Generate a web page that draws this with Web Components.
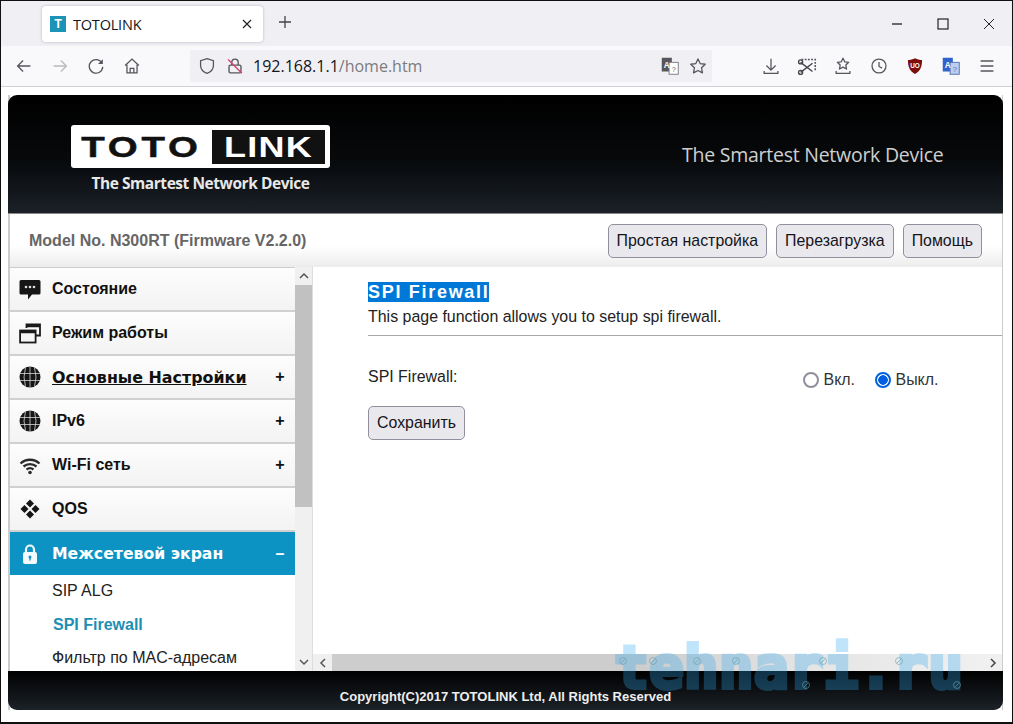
<!DOCTYPE html>
<html lang="ru">
<head>
<meta charset="utf-8">
<title>TOTOLINK</title>
<style>
html,body{margin:0;padding:0;height:100%;background:#fff;overflow:hidden;}
body{font-family:"Liberation Sans",Arial,sans-serif;}
#win{display:flex;flex-direction:column;width:1013px;height:724px;box-sizing:border-box;border:1px solid #111;border-bottom-width:2px;position:relative;overflow:hidden;}
</style>
</head>
<body>
<div id="win">
  <browser-chrome></browser-chrome>
  <router-frame>
    <router-header></router-header>
    <model-bar model="Model No. N300RT (Firmware V2.2.0)">
      <router-button>Простая настройка</router-button>
      <router-button>Перезагрузка</router-button>
      <router-button>Помощь</router-button>
    </model-bar>
    <div style="display:flex;height:404px">
      <side-menu>
        <menu-row icon="chat">Состояние</menu-row>
        <menu-row icon="windows">Режим работы</menu-row>
        <menu-row icon="globe" mark="+" wide underline>Основные Настройки</menu-row>
        <menu-row icon="globe" mark="+">IPv6</menu-row>
        <menu-row icon="wifi" mark="+">Wi-Fi сеть</menu-row>
        <menu-row icon="qos">QOS</menu-row>
        <menu-row icon="lock" mark="–" wide active>Межсетевой экран</menu-row>
        <sub-item>SIP ALG</sub-item>
        <sub-item current>SPI Firewall</sub-item>
        <sub-item>Фильтр по MAC-адресам</sub-item>
      </side-menu>
      <spi-page></spi-page>
    </div>
    <page-footer>Copyright(C)2017 TOTOLINK Ltd, All Rights Reserved</page-footer>
  </router-frame>
  <water-mark>tehnari.ru</water-mark>
</div>

<script>
const ICONS = {
  back:'<path d="M19 12H5.500M11 6l-6 6 6 6" fill="none" stroke="#55555c" stroke-width="1.400"/>',
  forward:'<path d="M5 12h13.500M13 6l6 6-6 6" fill="none" stroke="#b9b9be" stroke-width="1.400"/>',
  reload:'<path d="M18.600 9A7.400 7.400 0 1 0 19.400 13" fill="none" stroke="#55555c" stroke-width="1.400"/><path d="M19.400 4.500v5.200h-5.200z" fill="#55555c"/>',
  home:'<path d="M4.500 11.500L12 4.500l7.500 7M6.500 10.500V19.500h11V10.500M10 19.500v-5h4v5" fill="none" stroke="#55555c" stroke-width="1.400"/>',
  shield:'<path d="M12 4l7 2.200v5.300c0 4.200-2.700 6.900-7 8.500-4.300-1.600-7-4.300-7-8.500V6.200z" fill="none" stroke="#55555c" stroke-width="1.400"/>',
  insecure:'<path d="M7 11h10a1.500 1.500 0 0 1 1.500 1.500V18a1.500 1.500 0 0 1-1.500 1.500H7A1.500 1.500 0 0 1 5.500 18v-5.500A1.500 1.500 0 0 1 7 11zM8.500 11V8a3.500 3.500 0 0 1 7 0v3" fill="none" stroke="#55555c" stroke-width="1.500"/><path d="M4.500 5l15 15" stroke="#d0456c" stroke-width="1.600"/>',
  translate:'<rect x="3" y="3" width="11" height="15" fill="#55555b"/><rect x="11" y="8" width="10" height="13" fill="#fff" stroke="#77777d"/><text x="8.500" y="14" font-size="9" font-weight="700" fill="#fff" text-anchor="middle" font-family="Liberation Sans">A</text><text x="16" y="18" font-size="8" fill="#66666c" text-anchor="middle" font-family="Liberation Sans">?</text>',
  translateBlue:'<rect x="3" y="3" width="11" height="15" fill="#2f63cc"/><rect x="11" y="8" width="10" height="13" fill="#bccdef" stroke="#4f6fb0"/><text x="8.500" y="14" font-size="9" font-weight="700" fill="#fff" text-anchor="middle" font-family="Liberation Sans">A</text><text x="16" y="18" font-size="8" fill="#4f6fb0" text-anchor="middle" font-family="Liberation Sans">?</text>',
  star:'<path d="M12 4.300l2.400 5 5.500.8-4 3.900.95 5.500L12 16.900 7.150 19.500l.95-5.500-4-3.900 5.500-.8z" fill="none" stroke="#55555c" stroke-width="1.400" stroke-linejoin="round"/>',
  download:'<path d="M12 4v12M7 11.500l5 5 5-5M4.500 17.500V20h15v-2.500" fill="none" stroke="#55555c" stroke-width="1.400"/>',
  screenshot:'<path d="M6 5h15v12" fill="none" stroke="#55555c" stroke-width="1.700" stroke-dasharray="2 1.500"/><path d="M5 8l13 10M5 19l13-10" stroke="#44444a" stroke-width="1.500"/><circle cx="5" cy="7.500" r="2.200" fill="none" stroke="#44444a" stroke-width="1.500"/><circle cx="5" cy="19" r="2.200" fill="none" stroke="#44444a" stroke-width="1.500"/>',
  tray:'<path d="M12 3.500l1.900 3.900 4.300.6-3.100 3 .75 4.300L12 13.300l-3.850 2 .75-4.300-3.100-3 4.300-.6z" fill="none" stroke="#55555c" stroke-width="1.400" stroke-linejoin="round"/><path d="M4.500 17.500V20h15v-2.500" fill="none" stroke="#55555c" stroke-width="1.400"/>',
  clock:'<circle cx="12" cy="12" r="7.600" fill="none" stroke="#55555c" stroke-width="1.400"/><path d="M12 7.500V12.500l3.400 1.800" fill="none" stroke="#55555c" stroke-width="1.400"/>',
  ublock:'<path d="M12 3.500c2.500 1.300 5 1.900 7.700 1.900 0 7-1.700 12.300-7.700 15.200C6 17.700 4.300 12.400 4.300 5.400c2.700 0 5.200-.6 7.700-1.900z" fill="#7d0d0d"/><text x="12" y="14.500" font-size="7" font-weight="700" fill="#fff" text-anchor="middle" font-family="Liberation Sans">UO</text>',
  menu:'<path d="M5 6.500h14M5 12h14M5 17.500h14" stroke="#55555c" stroke-width="1.500"/>',
  chat:'<path d="M3 3h18a1.500 1.500 0 0 1 1.500 1.500v11.500A1.500 1.500 0 0 1 21 17.500h-7l-4 5v-5H3a1.500 1.500 0 0 1-1.500-1.500V4.500A1.500 1.500 0 0 1 3 3z" fill="#161616"/><circle cx="8" cy="10" r="1.300" fill="#ddd"/><circle cx="12" cy="10" r="1.300" fill="#ddd"/><circle cx="16" cy="10" r="1.300" fill="#ddd"/>',
  windows:'<path d="M8.500 7V3.500h13.500v11h-4" fill="none" stroke="#1b1b1b" stroke-width="1.800"/><path d="M8.500 5h13.500" stroke="#1b1b1b" stroke-width="2.500"/><rect x="2.100" y="9.500" width="15.500" height="12" fill="none" stroke="#1b1b1b" stroke-width="1.800"/><path d="M2 11h15.500" stroke="#1b1b1b" stroke-width="2.500"/>',
  globe:'<circle cx="12" cy="12" r="10.500" fill="#161616"/><path d="M1.500 8.500h21M1.500 15.500h21M12 1.500v21M7.500 2.500q-3 9.500 0 19M16.500 2.500q3 9.500 0 19" stroke="#d8d8d8" stroke-width=".8" fill="none"/>',
  wifi:'<path d="M2.500 10.500C8 5.500 16 5.500 21.500 10.500M5.500 13.500c3.800-3.200 9.200-3.200 13 0M8.500 16.500c2.100-1.600 4.900-1.600 7 0" fill="none" stroke="#2a2a2a" stroke-width="2.300"/><circle cx="12" cy="19.500" r="1.800" fill="#2a2a2a"/>',
  qos:'<path d="M12 2.500l4 4-4 4-4-4zM12 13.500l4 4-4 4-4-4zM6.500 8l4 4-4 4-4-4zM17.500 8l4 4-4 4-4-4z" fill="#161616"/>',
  lock:'<path d="M8 10.500V7.500a4 4 0 0 1 8 0v3" fill="none" stroke="#f2fafd" stroke-width="2.200"/><rect x="5" y="10" width="14" height="12" rx="2" fill="#f2fafd"/><circle cx="12" cy="15" r="1.500" fill="#0f96c4"/><path d="M11.300 15h1.400v3.500h-1.400z" fill="#0f96c4"/>'
};
const svg = (name, size = 24) => `<svg width="${size}" height="${size}" viewBox="0 0 24 24" aria-hidden="true">${ICONS[name]}</svg>`;

const define = (tag, html) => {
  class El extends HTMLElement {
    constructor(){
      super();
      this.attachShadow({mode:'open'}).innerHTML = typeof html === 'function' ? html(this) : html;
    }
  }
  customElements.define(tag, El);
};

const tool = (name, size = 22) => `<span class="tool">${svg(name, size)}</span>`;

define('browser-chrome', `<style>
:host{display:block;font-family:"Open Sans","Noto Sans",sans-serif;color:#15141a;}
.tabs{height:45px;background:#f0f0f4;display:flex;align-items:flex-start;}
.tab{margin:5px 0 0 41px;width:221px;height:36px;background:#fff;border-radius:4px;box-shadow:0 0 3px rgba(0,0,0,.25);display:flex;align-items:center;box-sizing:border-box;padding:0 10px 0 8px;font-size:14.500px;letter-spacing:-.2px;}
.fav{width:16px;height:16px;background:#1d93b8;color:#fff;font:700 12px/16px "Liberation Sans",sans-serif;text-align:center;margin-right:7px;}
.tab span.t{flex:1;}
.x,.plus{display:flex;}
.plus{margin:13px 0 0 14px;}
.ctl{margin-left:auto;display:flex;}
.ctl span{width:46px;height:45px;display:flex;align-items:center;justify-content:center;}
.bar{height:40px;background:#f9f9fb;display:flex;align-items:center;padding-left:5px;border-bottom:1px solid #cfcfd8;}
.tool{width:36px;height:36px;display:flex;align-items:center;justify-content:center;flex:none;}
.url{margin-left:40px;width:522px;height:32px;background:#f0f0f4;display:flex;align-items:center;box-sizing:border-box;margin-right:41px;}
.url .tool{width:28px;}
.url .ad{font-size:16px;color:#15141a;flex:1;padding-left:4px;}
.url .ad i{font-style:normal;color:#7b7b80;}
.url .shield{margin-left:3px;}
</style>
<div class="tabs">
  <div class="tab"><span class="fav">T</span><span class="t">TOTOLINK</span>
    <svg class="x" width="12" height="12" viewBox="0 0 12 12"><path d="M2 2l8 8M10 2l-8 8" stroke="#222" stroke-width="1.200"/></svg></div>
  <svg class="plus" width="16" height="16" viewBox="0 0 16 16"><path d="M8 2v12M2 8h12" stroke="#444" stroke-width="1.300"/></svg>
  <div class="ctl">
    <span><svg width="12" height="12" viewBox="0 0 12 12"><path d="M1 6h10" stroke="#111" stroke-width="1.200"/></svg></span>
    <span><svg width="12" height="12" viewBox="0 0 12 12"><rect x="1" y="1" width="10" height="10" fill="none" stroke="#111" stroke-width="1.100"/></svg></span>
    <span><svg width="12" height="12" viewBox="0 0 12 12"><path d="M1 1l10 10M11 1L1 11" stroke="#222" stroke-width="1"/></svg></span>
  </div>
</div>
<div class="bar">
  ${tool('back')}${tool('forward')}${tool('reload')}${tool('home')}
  <div class="url"><span class="shield">${tool('shield')}</span>${tool('insecure')}
    <span class="ad">192.168.1.1<i>/home.htm</i></span>${tool('translate')}${tool('star')}</div>
  ${tool('download')}${tool('screenshot')}${tool('tray')}${tool('clock')}${tool('ublock')}${tool('translateBlue')}${tool('menu')}
</div>`);

define('router-frame', `<style>
:host{display:block;margin:8px 9px 0 7px;border-right:1px solid #ccc;border-left:2px solid #ccc;}
</style><slot></slot>`);

define('router-header', `<style>
:host{display:flex;height:119px;margin-left:-2px;margin-right:-1px;background:linear-gradient(#000 0,#07090b 55%,#1b2128 100%);border-radius:9px 9px 0 0;border-bottom:1px solid #888;box-sizing:border-box;color:#fff;font-family:"Open Sans","Noto Sans",sans-serif;}
.brand{margin:30px 0 0 63px;width:259px;}
.logo{height:43px;background:#fff;border-radius:3px;display:flex;align-items:center;box-sizing:border-box;padding:0 5px 0 0;}
.toto{width:141px;text-align:center;color:#111;font:700 30px/34px "Liberation Sans",sans-serif;letter-spacing:3px;transform:scaleX(1.280);-webkit-text-stroke:.5px #111;}
.link{flex:1;height:34px;background:#111;}
.link span{display:block;text-align:center;color:#fff;font:700 30px/34px "Liberation Sans",sans-serif;letter-spacing:1px;transform:scaleX(1.200);}
.sub{font-size:15.500px;font-weight:700;text-align:center;margin-top:5px;color:#e8e8e8;letter-spacing:-.45px;line-height:20px;}
.tag{margin:47px 0 0 352px;font-size:19.500px;color:#cfcfcf;line-height:26px;letter-spacing:-.25px;white-space:nowrap;}
</style>
<div class="brand"><div class="logo"><span class="toto">TOTO</span><span class="link"><span>LINK</span></span></div>
<div class="sub">The Smartest Network Device</div></div>
<div class="tag">The Smartest Network Device</div>`);

define('model-bar', el => `<style>
:host{display:flex;align-items:center;height:53px;background:linear-gradient(#fff 60%,#ececec 100%);box-sizing:border-box;padding:0 20px 0 19px;}
.m{font:700 16px "Liberation Sans",sans-serif;color:#666;flex:1;}
.b{display:flex;gap:9px;}
</style><span class="m">${el.getAttribute('model')}</span><div class="b"><slot></slot></div>`);

define('router-button', `<style>
:host{display:inline-block;height:34px;box-sizing:border-box;border:1px solid #8f8f9d;border-radius:5px;background:#e9e9ed;color:#15141a;font:15.900px/32px "Liberation Sans",sans-serif;padding:0 8px;white-space:nowrap;}
</style><slot></slot>`);

define('side-menu', `<style>
:host{display:flex;width:302px;flex:none;height:404px;border-right:1px solid #ddd;overflow:hidden;box-sizing:content-box;}
.list{width:285px;flex:none;border-top:1px solid #ccc;box-sizing:border-box;}
.sb{width:17px;flex:none;background:#f0f0f0;display:flex;flex-direction:column;}
.arr{height:18px;display:flex;align-items:center;justify-content:center;flex:none;}
.thumb{height:222px;background:#c1c1c1;flex:none;}
.gap{flex:1;}
</style><div class="list"><slot></slot></div>
<div class="sb"><div class="arr"><svg width="10" height="8" viewBox="0 0 10 8"><path d="M1 6l4-4 4 4" fill="none" stroke="#555" stroke-width="1.500"/></svg></div>
<div class="thumb"></div><div class="gap"></div>
<div class="arr"><svg width="10" height="8" viewBox="0 0 10 8"><path d="M1 2l4 4 4-4" fill="none" stroke="#555" stroke-width="1.500"/></svg></div></div>`);

define('menu-row', el => `<style>
:host{display:flex;align-items:center;height:44px;box-sizing:border-box;background:linear-gradient(#fdfdfd,#f3f3f3);border-bottom:2px solid #d0d0d0;padding-left:8px;color:#111;font:700 16px "Liberation Sans",sans-serif;}
:host([wide]){font:700 15.900px "DejaVu Sans",sans-serif;}
:host([underline]) .lb{text-decoration:underline;}
:host([active]){background:#0d93c3;color:#fff;border-bottom:0;height:43px;font-size:15.700px;}
svg{flex:none;}
.lb{margin-left:10px;flex:1;white-space:nowrap;}
.mk{width:30px;text-align:center;flex:none;font:700 16px "Liberation Sans",sans-serif;}
</style>${svg(el.getAttribute('icon'))}<span class="lb"><slot></slot></span><span class="mk">${el.getAttribute('mark') || ''}</span>`);

define('sub-item', `<style>
:host{display:block;height:33.500px;padding-left:42px;font:16px/31.500px "Liberation Sans",sans-serif;color:#222;white-space:nowrap;}
:host([current]){color:#1d8fb3;font-weight:700;padding-left:43px;}
</style><slot></slot>`);

define('spi-page', `<style>
:host{display:flex;flex-direction:column;flex:1;min-width:0;height:404px;font:15.950px "Liberation Sans",sans-serif;color:#222;}
.body{flex:1;padding:15px 0 0 55px;}
h2{margin:0;font:700 18px/20px "Liberation Sans",sans-serif;letter-spacing:1.700px;color:#fff;background:#0078d7;display:inline-block;}
p{margin:5px 0 0;line-height:20px;}
hr{border:0;border-top:1px solid #aaa;margin:8px 0 0;}
.row{display:flex;margin-top:31px;height:22px;align-items:flex-start;line-height:20px;}
.row .lab{width:435px;}
.radio{display:flex;align-items:center;margin-right:20px;color:#333;margin-top:3px;}
.dot{width:16px;height:16px;box-sizing:border-box;border-radius:50%;border:2px solid #8f8f9d;margin-right:4.500px;background:#fff;}
.dot.on{border-color:#0060df;background:radial-gradient(circle,#0060df 0 4.500px,#fff 5px);}
.save{margin-top:17px;}
</style>
<div class="body">
  <h2>SPI Firewall</h2>
  <p>This page function allows you to setup spi firewall.</p>
  <hr>
  <div class="row"><span class="lab">SPI Firewall:</span>
    <span class="radio"><span class="dot"></span>Вкл.</span>
    <span class="radio"><span class="dot on"></span>Выкл.</span></div>
  <div class="save"><router-button>Сохранить</router-button></div>
</div>
<h-scroll></h-scroll>`);

define('h-scroll', `<style>
:host{display:flex;height:17px;flex:none;background:#f0f0f0;align-items:center;}
.arr{width:19px;display:flex;justify-content:center;flex:none;}
.th{flex:1;height:17px;background:linear-gradient(90deg,#cdcdcd 0,#cdcdcd 48%,#e4e4e4 72%,#f0f0f0 100%);}
</style><span class="arr"><svg width="8" height="10" viewBox="0 0 8 10"><path d="M6 1L2 5l4 4" fill="none" stroke="#555" stroke-width="1.500"/></svg></span><div class="th"></div>
<span class="arr"><svg width="8" height="10" viewBox="0 0 8 10"><path d="M2 1l4 4-4 4" fill="none" stroke="#444" stroke-width="1.500"/></svg></span>`);

define('page-footer', `<style>
:host{display:block;height:39px;margin:0 -1px 0 -2px;background:linear-gradient(#000,#1c2228);border-radius:0 0 9px 9px;color:#eee;text-align:center;font:700 13px/52px "Liberation Sans",sans-serif;overflow:hidden;}
</style><slot></slot>`);

define('water-mark', `<style>
:host{position:absolute;left:613px;top:627px;font:700 58px/80px "DejaVu Sans Mono",monospace;pointer-events:none;white-space:nowrap;}
.tx{color:rgb(50,170,240);-webkit-text-stroke:4px rgb(50,170,240);opacity:.3;}
svg{position:absolute;left:0;top:0;}
</style><span class="tx"><slot></slot></span>
<svg width="360" height="80" viewBox="0 0 360 80" aria-hidden="true" fill="none" stroke="rgba(100,160,170,.6)" stroke-width="1">
  ${[[9,33],[39,33],[83,33],[122,33],[209,33],[285,33],[192,57],[343,57]].map(p => `<circle cx="${p[0]}" cy="${p[1]}" r="3.500"/><path d="M${p[0]-2} ${p[1]+2}l4-4"/>`).join('')}
</svg>`);
</script>
</body>
</html>
